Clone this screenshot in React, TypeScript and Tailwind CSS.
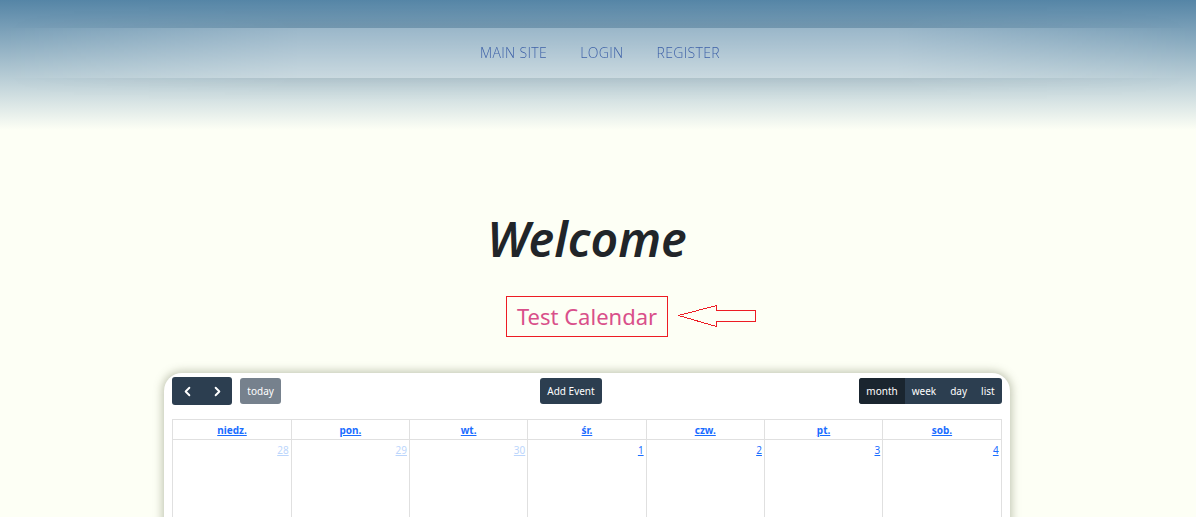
import { ChevronLeft, ChevronRight } from "lucide-react";

const navLinks = ["Main Site", "Login", "Register"];
const weekdays = ["niedz.", "pon.", "wt.", "śr.", "czw.", "pt.", "sob."];
const firstWeek = [
  { day: 28, other: true },
  { day: 29, other: true },
  { day: 30, other: true },
  { day: 1, other: false },
  { day: 2, other: false },
  { day: 3, other: false },
  { day: 4, other: false },
];
const views = ["month", "week", "day", "list"];

function SiteHeader() {
  return (
    <header className="bg-linear-to-b from-[#5585a6] to-[#fdfff5]">
      <div className="pt-7 pb-[52px] [mask-image:linear-gradient(to_right,transparent,black_25%,black_75%,transparent)]">
        <nav className="bg-white/25 shadow-[0_0_25px_rgba(0,0,0,0.1)]">
          <ul className="flex h-[50px] items-center justify-center gap-[33px] pl-1 font-['Open_Sans',sans-serif] text-sm font-light tracking-wide text-[#3f62a8]">
            {navLinks.map((label) => (
              <li key={label}>
                <a href="#" className="uppercase">{label}</a>
              </li>
            ))}
          </ul>
        </nav>
      </div>
    </header>
  );
}

function Toolbar() {
  return (
    <div className="grid grid-cols-3 items-center text-[10px] text-white">
      <div className="flex items-center gap-2">
        <div className="flex h-7 overflow-hidden rounded-[3px] bg-[#2c3e50]">
          <button type="button" aria-label="Previous month" className="grid w-[30px] place-items-center">
            <ChevronLeft size={15} strokeWidth={3} />
          </button>
          <button type="button" aria-label="Next month" className="grid w-[30px] place-items-center">
            <ChevronRight size={15} strokeWidth={3} />
          </button>
        </div>
        <button type="button" className="h-[26px] rounded-[3px] bg-[#76818d] px-[7px]">today</button>
      </div>
      <button type="button" className="mr-8 h-[26px] justify-self-center rounded-[3px] bg-[#2c3e50] px-[7px]">
        Add Event
      </button>
      <div className="flex h-[26px] justify-self-end overflow-hidden rounded-[3px] bg-[#2c3e50]">
        {views.map((view) => (
          <button
            key={view}
            type="button"
            aria-pressed={view === "month"}
            className="px-[7px] aria-pressed:bg-[#1a252f]"
          >
            {view}
          </button>
        ))}
      </div>
    </div>
  );
}

function MonthGrid() {
  return (
    <table className="mt-[14px] w-full table-fixed border-collapse text-[10px] leading-4 text-[#1a6dff]">
      <thead>
        <tr>
          {weekdays.map((name) => (
            <th key={name} scope="col" className="h-5 border border-[#e0e0e0] p-0 font-bold">
              <a href="#" className="underline">{name}</a>
            </th>
          ))}
        </tr>
      </thead>
      <tbody>
        <tr>
          {firstWeek.map(({ day, other }) => (
            <td key={day} className="h-24 border border-[#e0e0e0] px-[2px] py-[2px] text-right align-top">
              <a href="#" className={other ? "text-[#bcd6fc] underline" : "underline"}>{day}</a>
            </td>
          ))}
        </tr>
      </tbody>
    </table>
  );
}

export default function App() {
  return (
    <div className="h-screen overflow-hidden bg-[#fdfff5] font-['Noto_Sans',sans-serif]">
      <SiteHeader />
      <main className="flex flex-col items-center pt-20 pr-[22px]">
        <h1 className="text-5xl leading-[58px] font-semibold text-[#212529] italic">Welcome</h1>
        <div className="relative mt-7">
          <h2 className="border border-[#ed1c24] px-[10px] py-[3px] text-[22px] leading-[33px] text-[#d9508a]">
            Test Calendar
          </h2>
          <svg
            className="absolute top-2 left-full ml-2.5"
            width="80"
            height="24"
            viewBox="0 0 80 24"
            fill="none"
            stroke="#ed1c24"
            shapeRendering="crispEdges"
            aria-hidden="true"
          >
            <path d="M.5 11.5 38.5 1.5V6.5H77.5V17.5H38.5V22.5Z" />
          </svg>
        </div>
        <section className="mt-9 w-[72%] rounded-t-[18px] bg-white px-2 pt-1 shadow-[0_0_8px_2px_rgba(90,95,60,0.35)]">
          <Toolbar />
          <MonthGrid />
        </section>
      </main>
    </div>
  );
}
